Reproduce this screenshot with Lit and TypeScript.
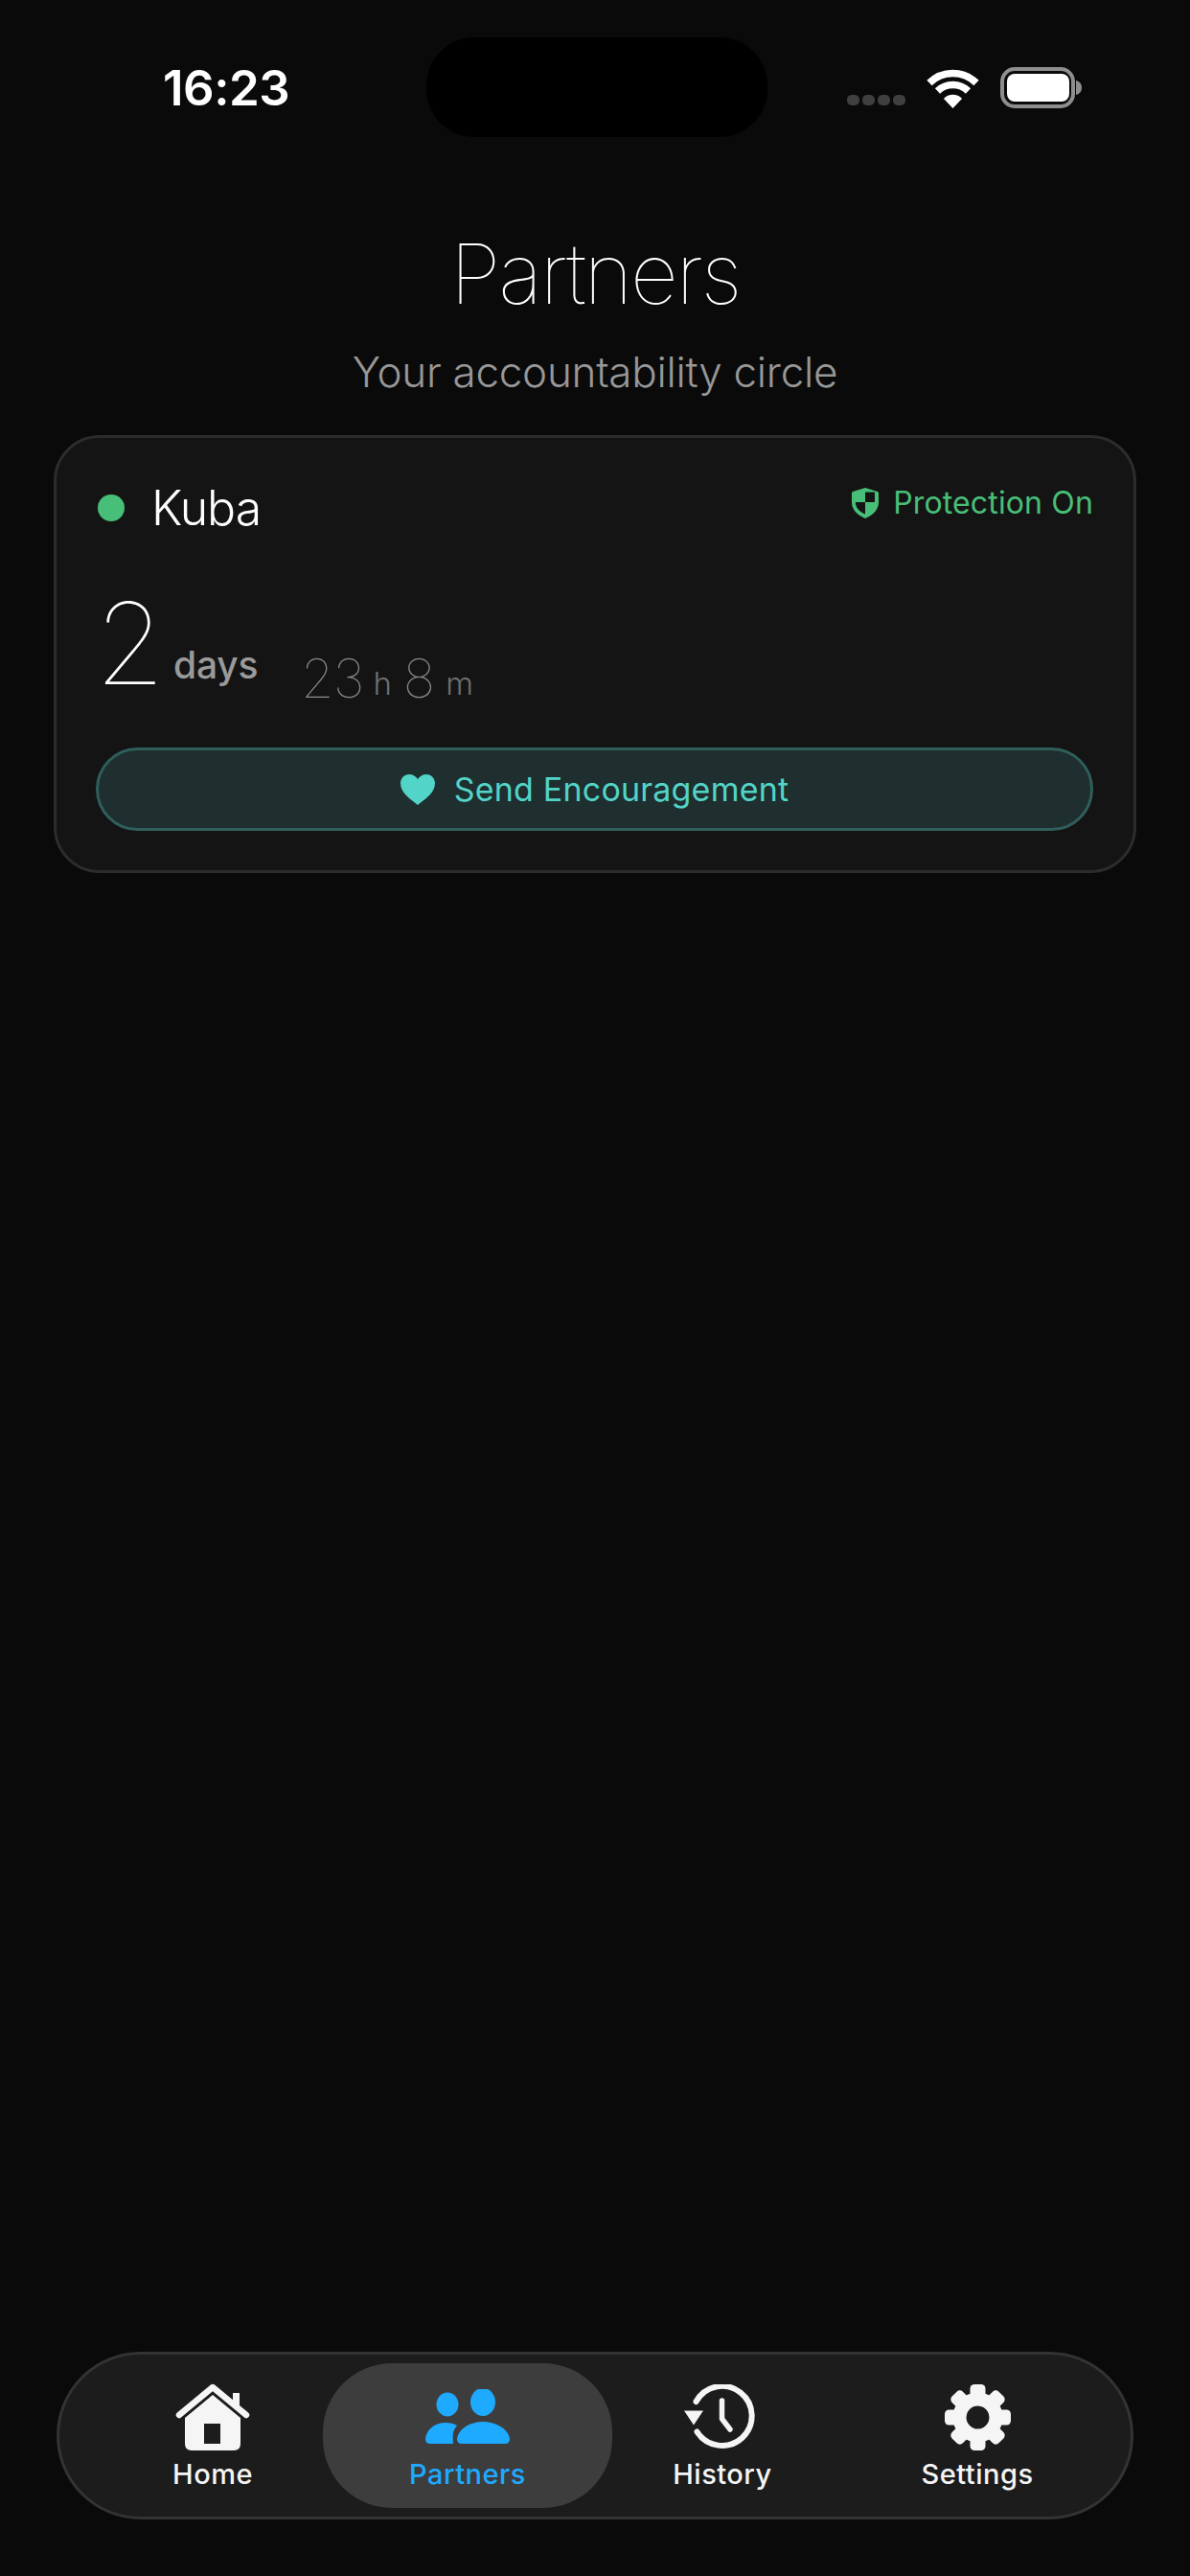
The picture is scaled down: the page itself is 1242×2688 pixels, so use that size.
import { LitElement, html, css, svg } from "lit";
import { customElement } from "lit/decorators.js";

const gearTeeth = [0, 45, 90, 135, 180, 225, 270, 315].map(
  (a) => svg`<rect x="26.5" y="0" width="16" height="18" rx="4.5" transform="rotate(${a} 34.5 34.5)"/>`
);

@customElement("app-root")
export class AppRoot extends LitElement {
  static styles = css`
    :host {
      display: flex;
      flex-direction: column;
      height: 2688px;
      background: #0a0a0a;
      font-family: Inter, "Noto Sans", sans-serif;
      color: #fff;
      overflow: hidden;
      position: relative;
    }
    .status {
      height: 200px;
      flex: none;
      display: flex;
      align-items: flex-start;
      padding: 0 112px 0 170px;
      box-sizing: border-box;
    }
    .clock {
      margin-top: 64px;
      font-size: 51px;
      line-height: 56px;
      font-weight: 600;
      letter-spacing: -0.5px;
    }
    .island {
      position: absolute;
      left: 445px;
      top: 39px;
      width: 356px;
      height: 104px;
      border-radius: 50px;
      background: #000;
    }
    .status-right {
      margin-left: auto;
      margin-top: 70px;
      display: flex;
      align-items: flex-end;
    }
    .dots { display: flex; gap: 3px; margin-right: 22px; margin-bottom: 3px; }
    .dots i { width: 13px; height: 11px; border-radius: 5px; background: #3f3f3f; }
    .wifi { display: block; margin-right: 22px; }
    .battery { display: block; }
    h1 {
      margin: 36px 0 0;
      text-align: center;
      font-size: 87px;
      line-height: 100px;
      font-weight: 100;
      letter-spacing: -2.3px;
    }
    .top { flex: none; height: 254px; margin-top: -200px; padding-top: 200px; box-sizing: content-box; }
    .sub {
      text-align: center;
      font-size: 44px;
      line-height: 54px;
      font-weight: 300;
      letter-spacing: -0.27px;
      color: #979797;
      margin-top: 25px;
    }
    .card {
      flex: none;
      box-sizing: border-box;
      width: 1130px;
      height: 457px;
      margin: 0 0 0 56px;
      border: 3px solid #2c2c2c;
      border-radius: 48px;
      background: #141414;
      padding: 0 41px;
      display: flex;
      flex-direction: column;
    }
    .row1 { height: 150px; display: flex; align-items: flex-start; }
    .dot { width: 28px; height: 28px; border-radius: 50%; background: #48bf78; margin: 59px 28px 0 2px; }
    .name { font-size: 50px; line-height: 60px; font-weight: 300; margin-top: 43px; letter-spacing: -1px; }
    .prot { margin-left: auto; margin-right: 1px; margin-top: 49px; display: flex; align-items: center; gap: 15px; color: #48bf78; font-size: 32px; line-height: 38px; }
    .prot span { letter-spacing: 0.15px; }
    .stat { height: 173px; display: flex; align-items: flex-start; }
    .big { font-size: 118px; line-height: 130px; font-weight: 100; margin: -1px 0 0 -1px; width: 82px; }
    .days { font-size: 39px; line-height: 48px; font-weight: 500; color: #9a9a9a; margin-top: 63px; width: 133px; letter-spacing: -0.2px; }
    .mid { font-size: 56px; line-height: 68px; font-weight: 100; color: #8a8a8a; margin-top: 67px; letter-spacing: -1px; }
    .unit { font-size: 33px; line-height: 42px; font-weight: 300; color: #6f6f6f; }
    .u1 { margin: 85px 12px 0 10px; }
    .u2 { margin: 85px 0 0 12px; }
    .btn {
      box-sizing: border-box;
      height: 87px;
      width: 1041px;
      margin-left: 0;
      border: 3px solid #2f5f5c;
      border-radius: 44px;
      background: #1f2e2e;
      display: flex;
      align-items: center;
      justify-content: center;
      gap: 20px;
      color: #52d4c8;
      font-size: 34px;
      letter-spacing: 0.2px;
    }
    .nav {
      margin: auto 0 59px 59px;
      box-sizing: border-box;
      width: 1124px;
      height: 175px;
      flex: none;
      border: 3px solid #333;
      border-radius: 88px;
      background: #1c1c1c;
      display: grid;
      grid-template-columns: repeat(4, 266px);
      justify-content: center;
      align-items: center;
    }
    .tab {
      justify-self: center;
      display: flex;
      flex-direction: column;
      align-items: center;
      width: 266px;
      height: 151px;
      box-sizing: border-box;
      color: #f5f5f5;
      font-size: 29px;
      font-weight: 450;
      letter-spacing: 0.5px;
    }
    .tab.active { width: 302px; background: #3d3d3d; border-radius: 72px; color: #1eaaff; }
    .ic { height: 74px; margin-top: 19px; display: flex; align-items: center; justify-content: center; }
    .tab span { line-height: 36px; margin-top: 5px; }
    .hist { margin-right: 6px; }
  `;

  render() {
    return html`
      <div class="status">
        <div class="clock">16:23</div>
        <div class="island"></div>
        <div class="status-right">
          <div class="dots"><i></i><i></i><i></i><i></i></div>
          <svg class="wifi" width="55" height="41" viewBox="0 0 55 41" fill="none" stroke="#fff" stroke-width="7.5">
            <path d="M3 14.5 A35 35 0 0 1 52 14.5"/>
            <path d="M11.5 23 A23 23 0 0 1 43.5 23"/>
            <path d="M18 31 L27.5 41 L37 31 A13 13 0 0 0 18 31Z" fill="#fff" stroke="none"/>
          </svg>
          <svg class="battery" width="86" height="43" viewBox="0 0 86 43" fill="none">
            <rect x="2" y="2" width="74" height="39" rx="13" stroke="#8e8e8e" stroke-width="4"/>
            <rect x="7" y="7" width="65" height="29" rx="8" fill="#fff"/>
            <path d="M79 14 C83 15 85 18 85 21.5 C85 25 83 28 79 29Z" fill="#8e8e8e"/>
          </svg>
        </div>
      </div>
      <div class="top">
        <h1>Partners</h1>
        <div class="sub">Your accountability circle</div>
      </div>
      <div class="card">
        <div class="row1">
          <div class="dot"></div>
          <div class="name">Kuba</div>
          <div class="prot">
            <svg width="28" height="32" viewBox="0 0 28 32">
              <path d="M14 0 L27 4 Q28 4.5 28 6 V15 C28 23 22 28.500 14 32 C6 28.500 0 23 0 15 V6 Q0 4.500 1 4Z" fill="#48bf78"/>
              <path d="M14 4.500 H24 V15 H14Z M14 15 V27.500 C8 25 4 21 3.800 15Z" fill="#141414"/>
            </svg>
            <span>Protection On</span>
          </div>
        </div>
        <div class="stat">
          <div class="big">2</div>
          <div class="days">days</div>
          <div class="mid">23</div>
          <div class="unit u1">h</div>
          <div class="mid">8</div>
          <div class="unit u2">m</div>
        </div>
        <div class="btn">
          <svg width="36" height="32" viewBox="0 0 36 32">
            <path d="M18 32 C12 27 0 20 0 9.500 C0 4 4 0 9 0 C13 0 16 2 18 5 C20 2 23 0 27 0 C32 0 36 4 36 9.500 C36 20 24 27 18 32Z" fill="#52d4c8"/>
          </svg>
          <span>Send Encouragement</span>
        </div>
      </div>
      <div class="nav">
        <div class="tab">
          <div class="ic">
            <svg width="78" height="71" viewBox="0 0 78 71">
              <path d="M60 10 H67 V26 L60 20Z" fill="#f5f5f5"/>
              <path d="M4 33 L39 4 L74 33" fill="none" stroke="#f5f5f5" stroke-width="6.500" stroke-linecap="round" stroke-linejoin="round"/>
              <path d="M10 36 L39 12 L68 36 V63 Q68 70 61 70 H17 Q10 70 10 63Z M30 42 V63 H47 V42Z" fill="#f5f5f5" fill-rule="evenodd"/>
            </svg>
          </div>
          <span>Home</span>
        </div>
        <div class="tab active">
          <div class="ic">
            <svg width="88" height="58" viewBox="0 0 88 58" fill="#1eaaff">
              <ellipse cx="23" cy="16" rx="11.500" ry="12.500"/>
              <ellipse cx="60" cy="13.500" rx="13" ry="14.500"/>
              <path d="M0 52 C1 42 10 35 21 35 C26 35 30 36 33 38 C29 42 28 47 29 57 H5 Q0 57 0 52Z"/>
              <path d="M33 52 C34 42 46 34 60 34 C74 34 87 42 88 52 Q88 57 83 57 H38 Q33 57 33 52Z"/>
            </svg>
          </div>
          <span>Partners</span>
        </div>
        <div class="tab">
          <div class="ic hist">
            <svg width="74" height="68" viewBox="0 0 74 68" fill="none" stroke="#f5f5f5">
              <path d="M12.500 18 A31 31 0 1 1 13.500 49.500" stroke-width="6" stroke-linecap="round"/>
              <path d="M0 27.500 H20 L10 42.500Z" fill="#f5f5f5" stroke="none"/>
              <path d="M39.500 17 V36 L48 47" stroke-width="5.500" stroke-linecap="round" stroke-linejoin="round"/>
            </svg>
          </div>
          <span>History</span>
        </div>
        <div class="tab">
          <div class="ic">
            <svg width="69" height="69" viewBox="0 0 69 69" fill="#f5f5f5">
              ${gearTeeth}
              <path fill-rule="evenodd" d="M34.500 8.500 A26 26 0 1 1 34.490 8.500Z M34.500 22.500 A12 12 0 1 0 34.510 22.500Z"/>
            </svg>
          </div>
          <span>Settings</span>
        </div>
      </div>
    `;
  }
}
